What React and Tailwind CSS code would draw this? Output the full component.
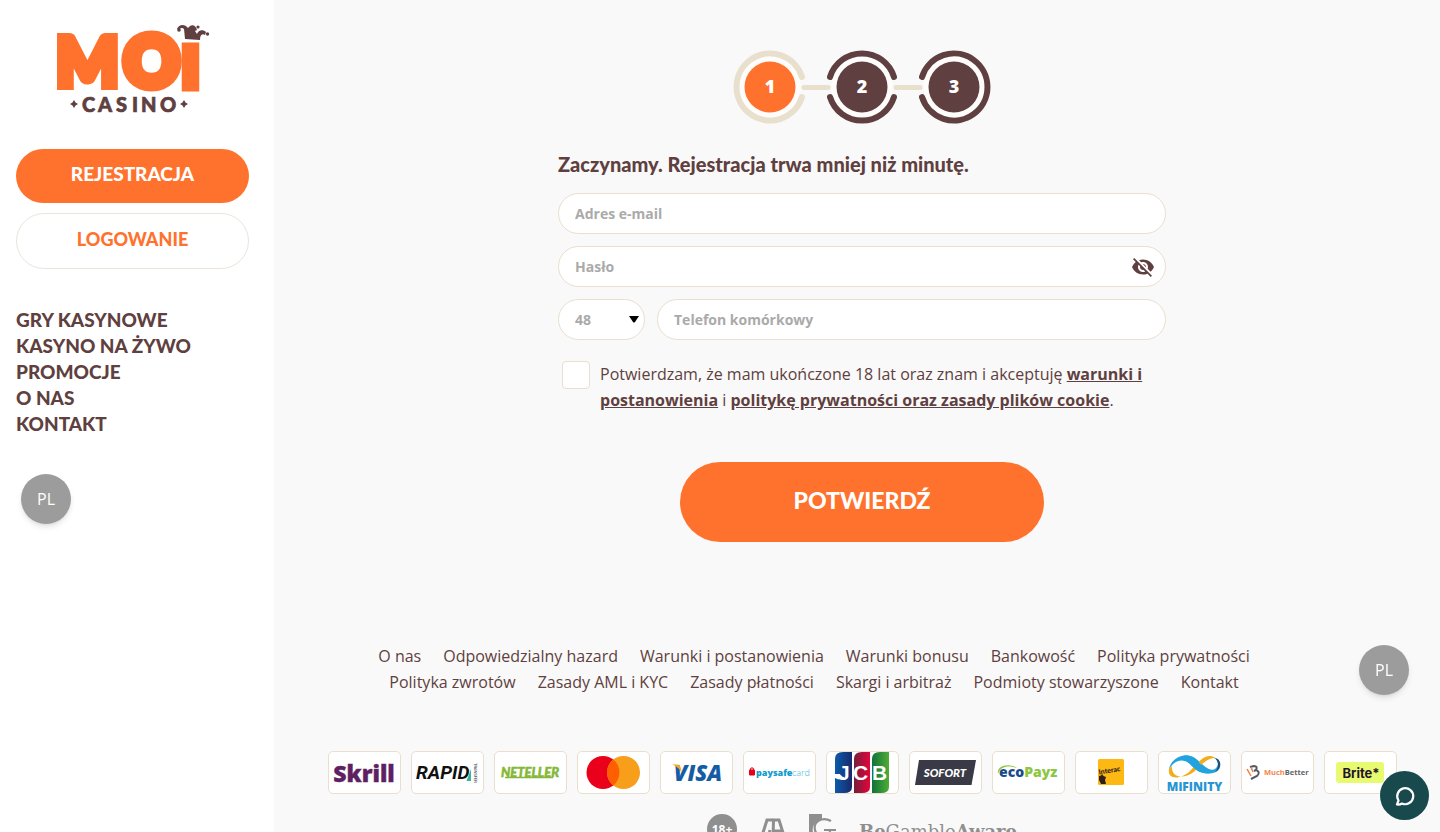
import { MdVisibilityOff } from "react-icons/md";

function Logo() {
  return (
    <svg width="154" height="90" viewBox="0 0 154 90" role="img" aria-label="MOI Casino" className="overflow-visible">
      <g
        fill="#ff722d"
        stroke="#ff722d"
        strokeLinejoin="miter"
        fontFamily="Lato, sans-serif"
        fontWeight="900"
      >
        <text x="0" y="62" fontSize="66" strokeWidth="8">M</text>
        <text x="68" y="62" fontSize="68" strokeWidth="10">O</text>
        <text x="126" y="63" fontSize="56" strokeWidth="9">I</text>
      </g>
      <g fill="#603f40">
        <path d="M129 15 L128 5 C126 3 124 4 123 6 L121 5 C123 0 129 0 132 4 L134 2 C137 0 140 2 141 6 L139 7 L141 10 C142 6 147 5 150 8 L149 11 C146 9 144 11 144 16 Z" />
        <circle cx="123" cy="6" r="1.8" />
        <circle cx="142" cy="3" r="1.6" />
        <circle cx="151.500" cy="10" r="1.700" />
        <path d="M18 76 L19.500 78.500 L22 80 L19.500 81.500 L18 84 L16.500 81.500 L14 80 L16.500 78.500 Z" />
        <path d="M128 76 L129.500 78.500 L132 80 L129.500 81.500 L128 84 L126.500 81.500 L124 80 L126.500 78.500 Z" />
      </g>
      <text
        x="26 42 60 76 85 104"
        y="87.500"
        fill="#603f40"
        stroke="#603f40"
        strokeWidth="0.700"
        fontFamily="Lato, sans-serif"
        fontWeight="900"
        fontSize="20"
      >
        CASINO
      </text>
    </svg>
  );
}

function Stepper() {
  const steps = [
    { x: 37, color: "#e9dfcd", disc: "#ff722d" },
    { x: 129, color: "#603f40", disc: "#603f40" },
    { x: 221, color: "#603f40", disc: "#603f40" },
  ];
  const arcs = [
    "M32 10 A33.5 33.5 0 1 1 32 -10",
    "M32 10 A33.5 33.5 0 0 1 -32 10 M-32 -10 A33.5 33.5 0 0 1 32 -10",
    "M-32 10 A33.5 33.5 0 1 0 -32 -10",
  ];
  return (
    <svg width="258" height="74" viewBox="0 0 258 74" role="img" aria-label="Krok 1 z 3">
      <g stroke="#e9dfcd" strokeWidth="5" strokeLinecap="round">
        <path d="M71 37.500 H95" />
        <path d="M163 37.500 H187" />
      </g>
      {steps.map((step, i) => (
        <g key={step.x} transform={`translate(${step.x} 37)`}>
          <circle r="30.500" fill="#fffdfb" />
          <path d={arcs[i]} fill="none" stroke={step.color} strokeWidth="6" strokeLinecap="round" />
          <circle r="25.500" fill={step.disc} />
          <text
            y="6"
            textAnchor="middle"
            fill="#fff"
            fontFamily="'Noto Sans', sans-serif"
            fontWeight="900"
            fontSize="18"
          >
            {i + 1}
          </text>
        </g>
      ))}
    </svg>
  );
}

const sans = "'Open Sans', sans-serif";
const lato = "Lato, sans-serif";

const payments = [
  {
    name: "Skrill",
    art: (
      <text x="36" y="31" textAnchor="middle" fontFamily={sans} fontWeight="800" fontSize="23" fill="#5e1f63" stroke="#5e1f63" strokeWidth="0.400">Skrill</text>
    ),
  },
  {
    name: "Rapid Transfer",
    art: (
      <>
        <text x="5" y="28" fontFamily="'Roboto', sans-serif" fontWeight="700" fontStyle="italic" fontSize="19" fill="#111">RAPID</text>
        <path d="M60 18 L55.500 30 H60 Z" fill="#35b796" />
        <text transform="translate(62.500 12) rotate(90)" fontFamily="Roboto, sans-serif" fontSize="4" fill="#333">TRANSFER</text>
      </>
    ),
  },
  {
    name: "Neteller",
    art: (
      <>
        <text x="36" y="26" textAnchor="middle" fontFamily={lato} fontWeight="900" fontStyle="italic" fontSize="13" fill="#84b836" stroke="#84b836" strokeWidth="0.500">NETELLER</text>
        <path d="M11 26.500 H59" stroke="#84b836" strokeWidth="1.500" />
      </>
    ),
  },
  {
    name: "Mastercard",
    art: (
      <>
        <circle cx="26" cy="21.500" r="16.500" fill="#eb001b" />
        <circle cx="46.500" cy="21.500" r="16.500" fill="#f79e1b" />
        <path d="M36.250 8.570 A16.500 16.500 0 0 1 36.250 34.430 A16.500 16.500 0 0 1 36.250 8.570" fill="#ff5f00" />
      </>
    ),
  },
  {
    name: "Visa",
    art: (
      <>
        <text x="38" y="29.500" textAnchor="middle" fontFamily={sans} fontWeight="800" fontStyle="italic" fontSize="22" fill="#155ca5">VISA</text>
        <path d="M12 13.500 H18 Q21 14.500 21.500 21 Q18 15.500 12 13.500" fill="#f5a623" />
      </>
    ),
  },
  {
    name: "paysafecard",
    art: (
      <>
        <path d="M7.500 19 V18 Q9 15.500 10.500 18 V19" fill="none" stroke="#e2001a" strokeWidth="1.200" />
        <rect x="6" y="18.500" width="6" height="6" rx="1" fill="#e2001a" />
        <text x="13" y="25" fontFamily={sans} fontSize="9" fontWeight="800" fill="#129bd0">paysafe</text>
        <text x="49" y="25" fontFamily={sans} fontSize="9" fontWeight="300" fill="#43b5df">card</text>
      </>
    ),
  },
  {
    name: "JCB",
    art: (
      <>
        <path d="M9 8 Q9 1 17 1 H26 V36 Q26 42 18 42 H9 Z" fill="url(#jcb-blue)" />
        <path d="M28 8 Q28 1 36 1 H44 V36 Q44 42 36 42 H28 Z" fill="url(#jcb-red)" />
        <path d="M46 8 Q46 1 54 1 H63 V36 Q63 42 55 42 H46 Z" fill="url(#jcb-green)" />
        <defs>
          <linearGradient id="jcb-blue"><stop stopColor="#0b5ba9" /><stop offset="1" stopColor="#18296d" /></linearGradient>
          <linearGradient id="jcb-red"><stop stopColor="#761d3c" /><stop offset="1" stopColor="#e3063b" /></linearGradient>
          <linearGradient id="jcb-green"><stop stopColor="#10723b" /><stop offset="1" stopColor="#4ead35" /></linearGradient>
        </defs>
        <text x="12 27 46" y="28.500" fontFamily="'Liberation Sans', sans-serif" fontWeight="700" fontSize="21" fill="#fff">JCB</text>
        <path d="M9 23 H14 Q15 26 18 26 V28.500 Q12 29 9 27 Z" fill="#fff" />
      </>
    ),
  },
  {
    name: "Sofort",
    art: (
      <>
        <path d="M10 9 H67 L62.500 34 H6 Z" fill="#393a45" />
        <text x="36" y="25.500" textAnchor="middle" fontFamily={lato} fontWeight="900" fontStyle="italic" fontSize="11.500" fill="#fff">SOFORT</text>
      </>
    ),
  },
  {
    name: "ecoPayz",
    art: (
      <>
        <text x="7" y="25.500" fontFamily={sans} fontWeight="800" fontSize="14" fill="#1b4a8c">eco<tspan fill="#8dc63f">Payz</tspan></text>
        <path d="M6 23 C4 14 18 12 25 17 C17 14 8 15 6 23" fill="#8dc63f" />
      </>
    ),
  },
  {
    name: "Interac",
    art: (
      <>
        <rect x="23" y="8" width="26" height="26" rx="1.500" fill="#fdb813" />
        <text transform="translate(24 23.500) rotate(-9)" fontFamily={lato} fontWeight="900" fontSize="7" fill="#2b2118">Interac</text>
        <path d="M24 25 L26 24.500 L27 23 L28.500 25 L31 26 L30 29 L31 33 H26 L24 29 Z" fill="#2b2118" />
      </>
    ),
  },
  {
    name: "MiFinity",
    art: (
      <>
        <path d="M11 19 C12 8 26 0 37 7 C45 13 50 21 57 18 C61 15 61 9 56 7 C64 8 64 18 58 21 C46 26 38 19 32 13 C24 6 15 10 11 19" fill="#22a3dd" />
        <path d="M11 18 C9 30 24 28 32 20 C40 12 47 0 58 7 C50 6 44 13 37 20 C26 29 13 27 14 15 Z" fill="#f3ad1c" />
        <path d="M26 5 C36 2 44 17 51 20 C43 25 37 18 32 13 Z" fill="#22a3dd" />
        <path d="M57 7 C64 8 64 18 57 21 C61 16 61 11 57 7" fill="#234d78" />
        <text x="36.500" y="39.500" textAnchor="middle" fontFamily={sans} fontWeight="800" fontSize="12" fill="#2795d2">MiFINITY</text>
      </>
    ),
  },
  {
    name: "MuchBetter",
    art: (
      <>
        <path d="M9 16 L13 15 Q17 15 15 19 L13 20 M15 19 Q20 21 16 25 L10 28" fill="none" stroke="#555961" strokeWidth="2" />
        <path d="M6 18 L10 25 M10 16 L12 21" stroke="#ed7e43" strokeWidth="1.500" />
        <text x="23" y="24" fontFamily={sans} fontWeight="700" fontSize="7.500" fill="#f0874f">Much<tspan fill="#646464">Better</tspan></text>
      </>
    ),
  },
  {
    name: "Brite",
    art: (
      <>
        <rect x="12" y="11" width="48" height="21" rx="3" fill="#e8fb70" />
        <text x="37" y="26.500" textAnchor="middle" fontFamily="Inter, sans-serif" fontWeight="700" fontSize="13" fill="#26152e">Brite*</text>
      </>
    ),
  },
];

const menu = ["Gry kasynowe", "Kasyno na żywo", "Promocje", "O nas", "Kontakt"];

const footerLinks = [
  ["O nas", "Odpowiedzialny hazard", "Warunki i postanowienia", "Warunki bonusu", "Bankowość", "Polityka prywatności"],
  ["Polityka zwrotów", "Zasady AML i KYC", "Zasady płatności", "Skargi i arbitraż", "Podmioty stowarzyszone", "Kontakt"],
];

const field =
  "h-[41px] w-full rounded-full border border-[#e9dfcd] bg-white px-4 text-[14px] font-bold text-[#603f40] outline-none placeholder:text-[#aaaaaa]";

function LanguageButton() {
  return (
    <button
      type="button"
      aria-label="Język: PL"
      className="flex size-[50px] items-center justify-center rounded-full bg-[#9c9c9c] text-base text-white shadow-md"
    >
      PL
    </button>
  );
}

function Sidebar() {
  return (
    <aside className="flex w-[274px] shrink-0 flex-col bg-white px-4 pt-6">
      <a href="#home" className="ml-10 block">
        <Logo />
      </a>
      <div className="mt-[35px] mr-[9px] flex flex-col gap-[10px] font-[Lato,sans-serif] text-[19px] leading-6 font-black">
        <a href="#register" className="flex h-[54px] items-center justify-center rounded-full bg-[#ff722d] pb-1 text-white">
          REJESTRACJA
        </a>
        <a href="#login" className="flex h-14 items-center justify-center rounded-full border border-[#eae4dc] pb-1 text-[18px] text-[#ff722d]">
          LOGOWANIE
        </a>
      </div>
      <nav className="mt-[38px] flex flex-col font-[Lato,sans-serif] text-[19px] leading-[26px] font-black text-[#603f40] uppercase">
        {menu.map((item) => (
          <a key={item} href="#menu">{item}</a>
        ))}
      </nav>
      <div className="mt-[37px] ml-[5px]">
        <LanguageButton />
      </div>
    </aside>
  );
}

function RegistrationForm() {
  return (
    <form className="flex w-full max-w-[608px] flex-col" onSubmit={(e) => e.preventDefault()}>
      <h1 className="mt-[27px] mb-4 font-[Lato,sans-serif] text-[20px] leading-[26px] font-black text-[#603f40]">
        Zaczynamy. Rejestracja trwa mniej niż minutę.
      </h1>
      <div className="flex flex-col gap-3">
        <input type="email" aria-label="Adres e-mail" placeholder="Adres e-mail" className={field} />
        <div className="relative">
          <input type="password" aria-label="Hasło" placeholder="Hasło" className={field} />
          <button type="button" aria-label="Pokaż hasło" className="absolute inset-y-0 right-[11px] flex items-center text-[#603f40]">
            <MdVisibilityOff size={24} />
          </button>
        </div>
        <div className="flex gap-3">
          <div className="relative w-[87px] shrink-0">
            <select
              aria-label="Numer kierunkowy"
              className="h-[41px] w-full appearance-none rounded-full border border-[#e9dfcd] bg-white px-4 text-[14px] font-bold text-[#aaaaaa] outline-none"
            >
              <option>48</option>
            </select>
            <svg width="10" height="7" viewBox="0 0 10 7" className="pointer-events-none absolute top-[17px] right-[6px]" aria-hidden="true">
              <path d="M0 0 H10 L6 6 Q5 7 4 6 Z" fill="#000" />
            </svg>
          </div>
          <input type="tel" aria-label="Telefon komórkowy" placeholder="Telefon komórkowy" className={field} />
        </div>
      </div>
      <div className="mt-[21px] flex gap-[10px] pl-1">
        <input
          id="terms"
          type="checkbox"
          className="size-7 shrink-0 appearance-none rounded-[4px] border border-[#e9dfcd] bg-white checked:bg-[#ff722d]"
        />
        <label htmlFor="terms" className="text-base leading-[26px]">
          Potwierdzam, że mam ukończone 18 lat oraz znam i akceptuję{" "}
          <a href="#terms-page" className="font-bold underline">warunki i postanowienia</a> i{" "}
          <a href="#privacy" className="font-bold underline">politykę prywatności oraz zasady plików cookie</a>.
        </label>
      </div>
      <button
        type="submit"
        className="mt-[49px] h-20 w-3/5 self-center rounded-full bg-[#ff722d] pb-1 font-[Lato,sans-serif] text-[23px] font-black text-white"
      >
        POTWIERDŹ
      </button>
    </form>
  );
}

function Footer() {
  return (
    <footer className="mt-[101px] flex w-full flex-col items-center">
      <nav className="mr-24 flex flex-col items-center leading-[26px]">
        {footerLinks.map((row, i) => (
          <div key={i} className="flex gap-[22px]">
            {row.map((item) => (
              <a key={item} href="#info" className="whitespace-nowrap">{item}</a>
            ))}
          </div>
        ))}
      </nav>
      <ul className="mt-14 flex gap-[10px]">
        {payments.map((p) => (
          <li key={p.name} className="h-[43px] w-[73px] shrink-0 rounded-[5px] bg-white outline outline-1 -outline-offset-1 outline-[#e9dfcd]">
            <svg width="73" height="43" viewBox="0 0 73 43" role="img" aria-label={p.name}>
              {p.art}
            </svg>
          </li>
        ))}
      </ul>
      <div className="mt-5 flex items-start text-[#8f8f8f]">
        <svg width="30" height="31" viewBox="0 0 30 31" role="img" aria-label="18+">
          <circle cx="15" cy="15" r="15" fill="#8f8f8f" />
          <text x="15" y="20" textAnchor="middle" fontFamily={sans} fontWeight="700" fontSize="12" fill="#fff">18+</text>
        </svg>
        <svg width="28" height="31" viewBox="0 0 28 31" className="ml-[22px]" role="img" aria-label="GA">
          <g fill="none" stroke="#8f8f8f" strokeWidth="3">
            <path d="M14 6 H8 L2 25 H9 L11 16" />
            <path d="M14 25 L14.500 6 H20 L26 25 M14 17 H23" />
          </g>
        </svg>
        <svg width="28" height="31" viewBox="0 0 28 31" className="ml-[22px]" role="img" aria-label="Gambling Therapy">
          <path d="M0 0 H13 V5 C4 8 2 15 5 21 H0 Z" fill="#8f8f8f" />
          <path d="M22 7 C13 2 4 8 6 16 C8 24 20 25 21 17 M15 16 H27" fill="none" stroke="#8f8f8f" strokeWidth="2.200" />
        </svg>
        <span className="mt-[6px] ml-[22px] font-['DejaVu_Serif',serif] text-[18px] leading-6">
          <b>Be</b>Gamble<b>Aware</b>
        </span>
      </div>
    </footer>
  );
}

export default function App() {
  return (
    <div className="flex h-screen bg-[#f9f9f9] font-['Open_Sans',sans-serif] text-base text-[#603f40]">
      <Sidebar />
      <main className="flex min-w-0 flex-1 flex-col items-center overflow-y-auto pt-[50px] pl-[10px] [scrollbar-width:none]">
        <div className="shrink-0">
          <Stepper />
        </div>
        <RegistrationForm />
        <Footer />
      </main>
      <div className="fixed right-[31px] bottom-[137px]">
        <LanguageButton />
      </div>
      <button
        type="button"
        aria-label="Czat"
        className="fixed right-[11px] bottom-3 flex size-[49px] items-center justify-center rounded-full bg-[#17494d]"
      >
        <svg width="22" height="22" viewBox="0 0 22 22" fill="none" stroke="#fff" strokeWidth="2.200" strokeLinejoin="round" aria-hidden="true">
          <path d="M3 19.500 L4.500 15.500 A8 8 0 1 1 8 18.500 Q6 19.800 3 19.500 Z" />
        </svg>
      </button>
    </div>
  );
}
